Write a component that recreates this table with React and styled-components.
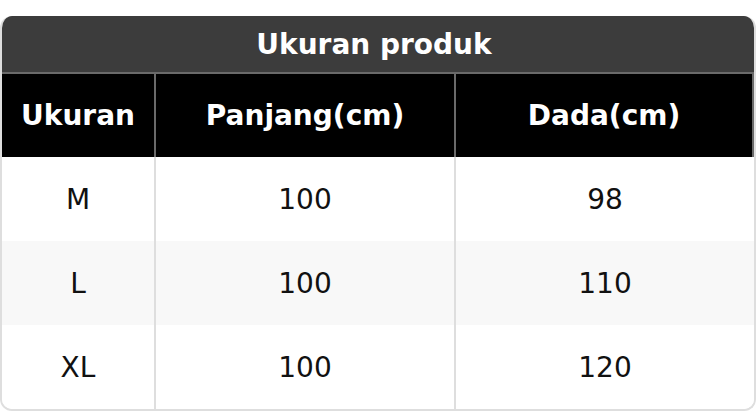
import React from "react";
import styled, { createGlobalStyle } from "styled-components";

const Global = createGlobalStyle`
  html, body { margin: 0; padding: 0; background: #fff; }
  body { font-family: "DejaVu Sans", "Liberation Sans", sans-serif; }
`;

const Wrap = styled.div`
  padding-top: 16px;
`;

const Table = styled.div`
  width: 756px;
  box-sizing: border-box;
  border: 2px solid #dedede;
  border-top: 0;
  border-radius: 12px;
  overflow: hidden;
  background: #fff;
`;

const Title = styled.div`
  height: 56px;
  margin: 0 -2px;
  padding-right: 8px;
  background: #3c3c3c;
  border-bottom: 2px solid #6a6a6a;
  color: #fff;
  font-weight: bold;
  font-size: 28px;
  display: flex;
  align-items: center;
  justify-content: center;
`;

const Row = styled.div`
  display: grid;
  grid-template-columns: 154px 300px 1fr;
  height: ${(p) => (p.$head ? 83 : 84)}px;
  background: ${(p) => (p.$head ? "#000" : p.$alt ? "#f8f8f8" : "#fff")};
  color: ${(p) => (p.$head ? "#fff" : "#111")};
  font-weight: ${(p) => (p.$head ? "bold" : "normal")};
  font-size: 28px;
`;

const Cell = styled.div`
  display: flex;
  align-items: center;
  justify-content: center;
  border-right: ${(p) =>
    p.$last && !p.$head ? "0" : `2px solid ${p.$head ? "#6a6a6a" : "#dedede"}`};
`;

const head = ["Ukuran", "Panjang(cm)", "Dada(cm)"];
const rows = [
  ["M", "100", "98"],
  ["L", "100", "110"],
  ["XL", "100", "120"],
];

export default function App() {
  return (
    <>
      <Global />
      <Wrap>
        <Table>
          <Title>Ukuran produk</Title>
          <Row $head>
            {head.map((h, i) => (
              <Cell key={h} $head $last={i === 2}>{h}</Cell>
            ))}
          </Row>
          {rows.map((r, ri) => (
            <Row key={ri} $alt={ri === 1}>
              {r.map((c, i) => (
                <Cell key={i} $last={i === 2}>{c}</Cell>
              ))}
            </Row>
          ))}
        </Table>
      </Wrap>
    </>
  );
}
